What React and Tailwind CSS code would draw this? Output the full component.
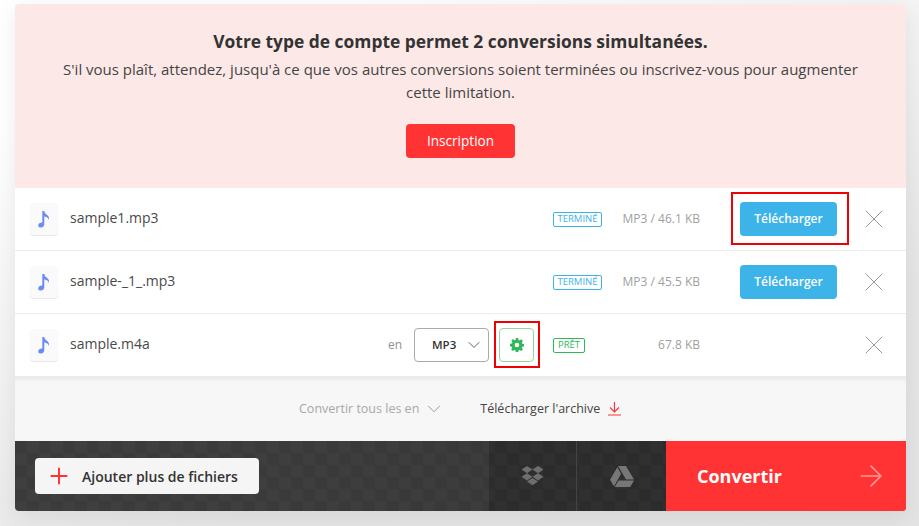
import { ChevronDown, X, ArrowRight, Plus } from "lucide-react";

function NoteIcon() {
  return (
    <div className="w-7 h-8 rounded bg-[#fafafa] shadow-[0_1px_1px_rgba(0,0,0,0.1)] flex items-center justify-center shrink-0">
      <svg width="12" height="17" viewBox="0 0 12 17" fill="#6c8cf5">
        <path d="M4.300 0h2c0.200 2 1.300 2.900 2.600 3.800 1.500 1.100 2.600 2.500 1.900 5.200-0.300-1.600-1.300-2.500-2.500-3-0.700-0.300-1.400-0.500-2-0.800v8c0 2-1.800 3.300-3.500 3.300-1.500 0-2.600-0.800-2.600-2.100 0-1.800 1.800-2.900 3.500-2.900 0.200 0 0.400 0 0.600 0.100z" />
      </svg>
    </div>
  );
}

function Status({ children, green }) {
  return (
    <span
      className={
        "inline-flex items-center justify-center h-[15px] rounded-[2px] border text-[9.5px] uppercase leading-none " +
        (green ? "w-[32px] border-[#2fb85a] text-[#2fb85a]" : "w-[49px] border-[#3db4e9] text-[#3db4e9]")
      }
    >
      {children}
    </span>
  );
}

function Redbox() {
  return <span className="absolute inset-0 border-[2px] border-[#f00000] pointer-events-none" />;
}

function Close({ className }) {
  return <X className={className + " text-[#999]"} size={32} strokeWidth={0.75} />;
}

function Row({ name, children }) {
  return (
    <div className="flex items-center h-[63px] pl-[15px] pr-[16px] bg-white border-b border-[#ececec]">
      <NoteIcon />
      <span className="ml-[12px] pb-[3px] text-[14px] text-[#4a4a4a]">{name}</span>
      <div className="ml-auto flex items-center h-full">{children}</div>
    </div>
  );
}

function Done({ size, boxed }) {
  const button = (
    <button className="w-[97px] h-[34px] pb-[1px] rounded bg-[#3db4e9] text-white text-[12px] font-semibold">
      Télécharger
    </button>
  );
  return (
    <>
      <Status>Terminé</Status>
      <span className="w-[98px] text-right text-[12px] text-[#a0a0a0]">{size}</span>
      {boxed ? (
        <div className="relative ml-[31px] mr-[-12px] mb-[1px] pl-[9px] pr-[12px] pt-[10px] pb-[9px] flex">
          {button}
          <Redbox />
        </div>
      ) : (
        <div className="ml-[40px] flex">{button}</div>
      )}
      <Close className="ml-[21px]" />
    </>
  );
}

export default function App() {
  return (
    <div className="w-[919px] h-[526px] overflow-hidden bg-[linear-gradient(160deg,#ffffff_15%,#e6e6e6_70%,#e4e4e4)] pt-[4px] pl-[15px] font-['Open_Sans',sans-serif]">
      <div className="w-[891px] h-[507px] rounded-[4px] overflow-hidden flex flex-col shadow-[0_6px_24px_rgba(0,0,0,0.08)]">
        <div className="h-[184px] bg-[#fce9e7] flex flex-col items-center pt-[24px] text-[#333]">
          <h2 className="text-[17.4px] font-bold leading-[26px]">Votre type de compte permet 2 conversions simultanées.</h2>
          <p className="w-[800px] text-center text-[15px] leading-[23px] text-[#444] mt-[4px]">
            S'il vous plaît, attendez, jusqu'à ce que vos autres conversions soient terminées ou inscrivez-vous pour augmenter cette limitation.
          </p>
          <button className="mt-[20px] w-[109px] h-[34px] rounded bg-[#ff3333] text-white text-[13.6px]">Inscription</button>
        </div>

        <Row name="sample1.mp3">
          <Done size="MP3 / 46.1 KB" boxed />
        </Row>
        <Row name="sample-_1_.mp3">
          <Done size="MP3 / 45.5 KB" />
        </Row>
        <Row name="sample.m4a">
          <span className="text-[12px] text-[#8f8f8f]">en</span>
          <div className="ml-[12px] w-[75px] h-[34px] rounded border border-[#aaa] flex items-center justify-between pl-[17px] pr-[4px]">
            <span className="text-[11.5px] font-semibold text-[#333]">MP3</span>
            <ChevronDown size={20} strokeWidth={1.1} className="text-[#555]" />
          </div>
          <div className="relative ml-[5px] mb-[1px] w-[46px] h-[47px] flex items-center pl-[5px]">
            <div className="w-[35px] h-[34px] rounded border border-[#9ad49a] flex items-center justify-center">
              <svg width="14" height="14" viewBox="0 0 14 14" fill="#2fb85a">
                <path fillRule="evenodd" d="M5.8 0h2.4l.3 1.9 1.1.5 1.6-1.1 1.7 1.7-1.1 1.6.5 1.1 1.9.3v2.4l-1.9.3-.5 1.1 1.1 1.6-1.7 1.7-1.6-1.1-1.1.5-.3 1.9H5.800l-.3-1.9-1.100-.5-1.600 1.100-1.700-1.700 1.100-1.600-.5-1.100L0 8.200V5.800l1.900-.3.5-1.100-1.100-1.600L3 1.100l1.600 1.100 1.100-.5zM7 4.700a2.300 2.300 0 1 0 0 4.600 2.300 2.300 0 0 0 0-4.600z" />
              </svg>
            </div>
            <Redbox />
          </div>
          <span className="ml-[13px] flex"><Status green>Prêt</Status></span>
          <span className="w-[115px] text-right text-[12px] text-[#a0a0a0]">67.8 KB</span>
          <Close className="ml-[158px]" />
        </Row>

        <div className="h-[64px] bg-[#f7f7f7] flex items-center pl-[284px] shadow-[inset_0_6px_6px_-6px_rgba(0,0,0,0.12)] text-[12.5px]">
          <span className="text-[#a8a8a8]">Convertir tous les en</span>
          <ChevronDown size={22} strokeWidth={0.9} className="ml-[4px] text-[#888]" />
          <span className="ml-[35px] text-[#444]">Télécharger l'archive</span>
          <svg className="ml-[7px]" width="15" height="14" viewBox="0 0 15 14" fill="none" stroke="#ff3333" strokeWidth="1.2">
            <path d="M7.500 0v10M3 5.500l4.500 4.500L12 5.500M1 13h13" />
          </svg>
        </div>

        <div className="h-[70px] flex bg-[linear-gradient(90deg,rgba(0,0,0,0)_20%,rgba(0,0,0,0.05)_55%),repeating-conic-gradient(#3f3f3f_0%_25%,#3b3b3b_0%_50%)] bg-[length:100%_100%,24px_24px]">
          <div className="flex-1 flex items-center pl-[20px]">
            <button className="w-[224px] h-[36px] rounded bg-[#f5f5f5] flex items-center pl-[11px] text-[14px] font-semibold text-[#333]">
              <Plus size={26} strokeWidth={1.8} className="text-[#ff3333]" />
              <span className="ml-[10px]">Ajouter plus de fichiers</span>
            </button>
          </div>
          <div className="w-[88px] flex items-center justify-center bg-black/20 border-r border-[#444]">
            <svg width="23" height="20" viewBox="0 0 23 20" fill="#6e6e6e">
              <path d="M6 0l5.500 3.600L6 7.200.5 3.600zM17 0l5.500 3.600L17 7.200l-5.500-3.600zM.5 10.800L6 7.200l5.500 3.600L6 14.400zM17 7.200l5.500 3.600L17 14.400l-5.500-3.600zM6 15.500l5.500-3.600 5.500 3.600-5.500 3.700z" />
            </svg>
          </div>
          <div className="w-[89px] flex items-center justify-center bg-black/20">
            <svg width="24" height="21" viewBox="0 0 24 21" fill="#777777">
              <path d="M8 0h8l8 13.500h-8zM7.300 1.200l3.800 6.500L4 20.500 0 13.700zM8.600 14.500H24L20.200 21H4.800z" />
            </svg>
          </div>
          <div className="w-[240px] bg-[#ff3333] flex items-center justify-between pl-[31px] pr-[18px]">
            <span className="text-[18px] font-bold text-white">Convertir</span>
            <ArrowRight size={34} strokeWidth={1.1} className="text-[#ff9c9c]" />
          </div>
        </div>
      </div>
    </div>
  );
}
